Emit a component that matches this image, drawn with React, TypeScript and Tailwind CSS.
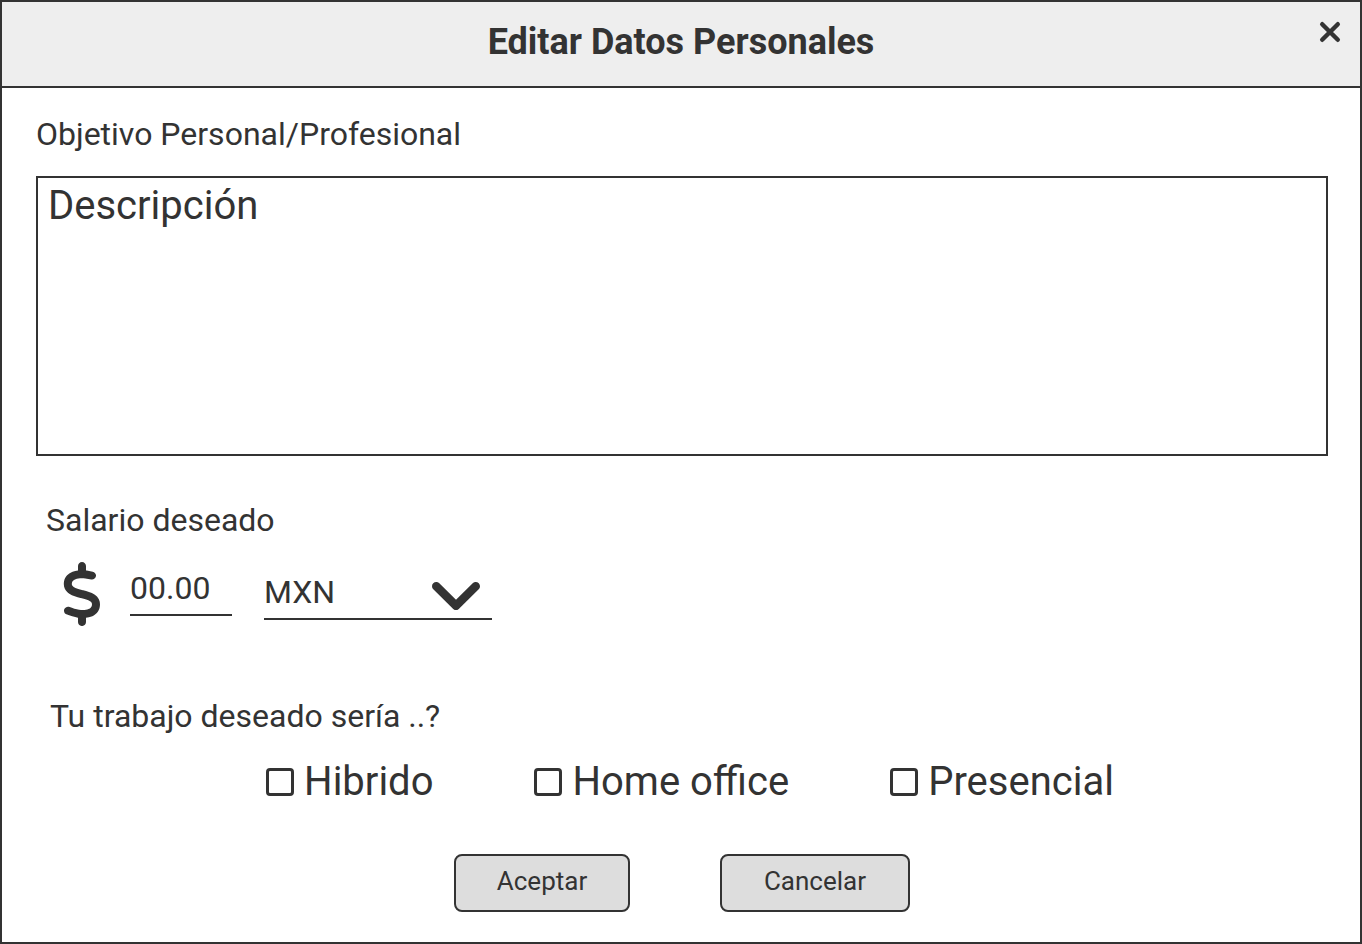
import React from 'react';
import { FaDollarSign } from 'react-icons/fa6';

const workModes = ['Hibrido', 'Home office', 'Presencial'];

function CloseIcon() {
  return (
    <svg viewBox="0 0 24 24" className="size-6" fill="none" stroke="currentColor" strokeWidth="4.4" strokeLinecap="round" aria-hidden="true">
      <path d="M4.2 4.2 19.8 19.8M19.8 4.2 4.2 19.8" />
    </svg>
  );
}

function ChevronIcon() {
  return (
    <svg viewBox="0 0 48 28" className="pointer-events-none absolute right-3 top-[10px] h-7 w-12" fill="none" stroke="currentColor" strokeWidth="8.6" strokeLinecap="round" strokeLinejoin="round" aria-hidden="true">
      <path d="M4.3 4.3 24 23.7 43.7 4.3" />
    </svg>
  );
}

export default function App() {
  return (
    <div
      role="dialog"
      aria-labelledby="dialog-title"
      className="flex min-h-screen flex-col border-2 border-[#333333] bg-white font-[Roboto,sans-serif] text-[#333333]"
    >
      <header className="relative border-b-2 border-[#333333] bg-[#eeeeee] px-16 pb-[22px] pt-[18px]">
        <h1 id="dialog-title" className="text-center text-[36px] font-bold leading-[44px]">
          Editar Datos Personales
        </h1>
        <button type="button" aria-label="Cerrar" className="absolute right-[18px] top-[18px]">
          <CloseIcon />
        </button>
      </header>

      <form className="pb-7 pl-[34px] pr-8 pt-[26px]" onSubmit={(e) => e.preventDefault()}>
        <label htmlFor="goal" className="block text-[32px] leading-10">
          Objetivo Personal/Profesional
        </label>
        <textarea
          id="goal"
          placeholder="Descripción"
          className="mt-[22px] block h-[280px] w-full resize-none border-2 border-[#333333] bg-white px-[10px] py-1 text-[40px] leading-[48px] placeholder:text-[#333333]"
        />

        <div className="mt-11 pl-[10px]">
          <label htmlFor="salary" className="block text-[32px] leading-10">
            Salario deseado
          </label>
          <div className="mt-[22px] flex items-end pl-4 text-[32px] leading-10">
            <FaDollarSign className="h-16 w-10 shrink-0" aria-hidden="true" />
            <input
              id="salary"
              type="text"
              inputMode="decimal"
              defaultValue="00.00"
              className="mb-[10px] ml-7 h-12 w-[102px] border-b-2 border-[#333333] bg-transparent pb-[6px]"
            />
            <div className="relative mb-[6px] ml-8 w-[228px]">
              <select
                aria-label="Moneda"
                defaultValue="MXN"
                className="block h-12 w-full appearance-none border-b-2 border-[#333333] bg-transparent pb-[6px]"
              >
                <option>MXN</option>
              </select>
              <ChevronIcon />
            </div>
          </div>
        </div>

        <fieldset className="mt-[70px]">
          <legend className="pl-[14px] text-[32px] leading-10">Tu trabajo deseado sería ..?</legend>
          <div className="mt-[22px] flex flex-wrap justify-center gap-x-[101px] pl-4">
            {workModes.map((mode) => (
              <label key={mode} className="flex items-center gap-[10px] text-[40px] leading-[48px]">
                <input
                  type="checkbox"
                  className="size-7 appearance-none rounded-sm border-3 border-[#333333] bg-white checked:bg-[#333333]"
                />
                {mode}
              </label>
            ))}
          </div>
        </fieldset>

        <div className="mt-12 flex justify-center gap-[90px] text-[26px] leading-8">
          <button type="submit" className="min-w-[176px] rounded-lg border-2 border-[#333333] bg-[#dddddd] px-10 pb-[13px] pt-[9px]">
            Aceptar
          </button>
          <button type="button" className="min-w-[190px] rounded-lg border-2 border-[#333333] bg-[#dddddd] px-10 pb-[13px] pt-[9px]">
            Cancelar
          </button>
        </div>
      </form>
    </div>
  );
}
